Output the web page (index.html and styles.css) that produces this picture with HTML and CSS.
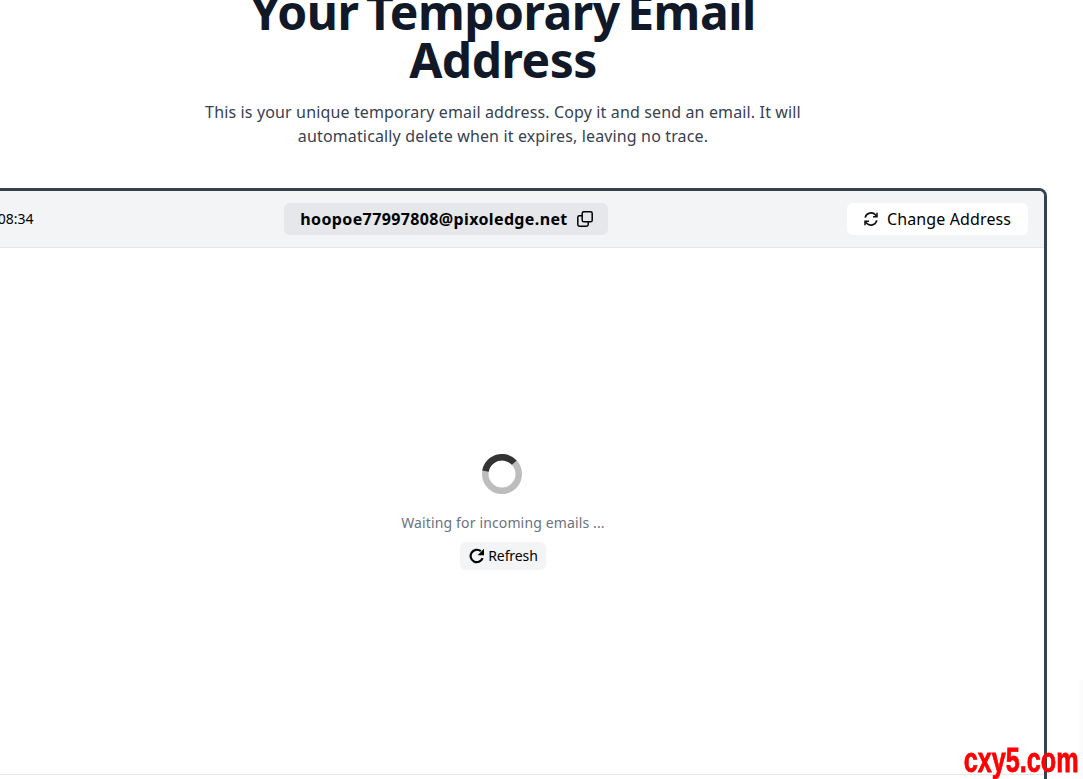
FILE: index.html
```html
<!DOCTYPE html>
<html lang="en">
<head>
    <meta charset="UTF-8">
    <meta name="viewport" content="width=device-width, initial-scale=1.0">
    <title>Your Temporary Email Address</title>
    <link rel="stylesheet" href="styles.css">
</head>
<body>
    <div class="main">
        <div class="hero">
            <h1>Your Temporary Email Address</h1>
            <p>This is your unique temporary email address. Copy it and send an email. It will automatically delete when it expires, leaving no trace.</p>
        </div>
        <div class="panel">
            <div class="panel-head">
                <div class="timer">00:08:34</div>
                <div class="address">
                    <span>hoopoe77997808@pixoledge.net</span>
                    <svg width="18" height="18" viewBox="0 0 18 18" fill="none" stroke="#000" stroke-width="1.5">
                        <rect x="6.2" y="1.8" width="10" height="10" rx="1.6"/>
                        <path d="M6.2 5.8H3.4a1.6 1.6 0 0 0-1.6 1.6v7.2a1.6 1.6 0 0 0 1.6 1.6h7.2a1.6 1.6 0 0 0 1.6-1.6v-2.8"/>
                    </svg>
                </div>
                <button class="change-btn">
                    <svg width="16" height="16" viewBox="0 0 16 16" fill="none" stroke="#111" stroke-width="1.7">
                        <path d="M2.2 6.6A6 6 0 0 1 12.6 4l1.2 1.4"/>
                        <path d="M13.8 9.4A6 6 0 0 1 3.4 12l-1.2-1.4"/>
                        <path d="M14 1.8v4h-4" stroke-width="1.5"/>
                        <path d="M2 14.2v-4h4" stroke-width="1.5"/>
                    </svg>
                    Change Address
                </button>
            </div>
            <div class="panel-body">
                <svg class="spinner" width="40" height="40" viewBox="0 0 40 40" fill="none" stroke-width="6.5">
                    <circle cx="20" cy="20" r="16.75" stroke="#bdbdbd"/>
                    <circle cx="20" cy="20" r="16.75" stroke="#333" stroke-dasharray="37 200" transform="rotate(-170 20 20)"/>
                </svg>
                <div class="waiting">Waiting for incoming emails ...</div>
                <button class="refresh-btn">
                    <svg width="16" height="16" viewBox="0 0 16 16" fill="none" stroke="#000" stroke-width="2.2">
                        <path d="M13.6 10.2A6.2 6.2 0 1 1 11.8 3.2"/>
                        <path d="M15 .8v6.4H8.6z" fill="#000" stroke="none"/>
                    </svg>
                    Refresh
                </button>
            </div>
            <div class="panel-foot"></div>
        </div>
    </div>
    <div class="edge-shade"></div>
    <div class="mark">cxy5.com</div>
</body>
</html>
```

FILE: styles.css
```css
* {
    margin: 0;
    padding: 0;
    box-sizing: border-box;
}
html, body {
    height: 100%;
    overflow: hidden;
    background-color: #fff;
}
body {
    font-family: "Noto Sans", "Open Sans", sans-serif;
    color: #000;
}
.main {
    width: 1088px;
    margin-left: -41px;
    margin-top: -12px;
}
.hero {
    display: flex;
    flex-direction: column;
    align-items: center;
    text-align: center;
}
.hero h1 {
    width: 600px;
    font-size: 48px;
    line-height: 48px;
    font-weight: 700;
    color: #111827;
    letter-spacing: -0.5px;
    word-spacing: -4.5px;
}
.hero p {
    width: 620px;
    margin-top: 16px;
    font-size: 16px;
    line-height: 24px;
    letter-spacing: 0.14px;
    color: #374151;
}
.panel {
    margin-top: 40px;
    height: 640px;
    border: 3px solid #374151;
    border-radius: 8px;
    display: flex;
    flex-direction: column;
}
.panel-head {
    height: 57px;
    flex: none;
    padding: 0 16px;
    display: flex;
    align-items: center;
    justify-content: space-between;
    background-color: #f3f4f6;
    border-bottom: 1px solid #e5e7eb;
    border-radius: 5px 5px 0 0;
}
.timer {
    font-size: 14px;
    width: 67px;
    padding-bottom: 1px;
}
.address {
    display: flex;
    align-items: center;
    gap: 8px;
    height: 32px;
    padding: 0 14px 0 16px;
    background-color: #e5e7eb;
    border-radius: 6px;
    font-size: 16px;
    font-weight: 700;
    letter-spacing: 0.37px;
}
.change-btn {
    display: flex;
    align-items: center;
    gap: 8px;
    height: 32px;
    width: 181px;
    padding: 0 16px;
    border: none;
    border-radius: 6px;
    background-color: #fff;
    font-family: inherit;
    font-size: 16px;
    letter-spacing: 0.12px;
    color: #000;
}
.panel-body {
    flex: 1;
    display: flex;
    flex-direction: column;
    align-items: center;
    padding-top: 206px;
}
.spinner {
    margin-right: 2px;
}
.waiting {
    margin-top: 19px;
    font-size: 14px;
    line-height: 20px;
    letter-spacing: 0.14px;
    color: #6b7280;
}
.refresh-btn {
    display: flex;
    align-items: center;
    gap: 3px;
    margin-top: 9px;
    height: 28px;
    padding: 0 8px 1px 9px;
    border: none;
    border-radius: 6px;
    background-color: #f3f4f6;
    font-family: inherit;
    font-size: 14px;
    letter-spacing: -0.1px;
    color: #000;
}
.panel-foot {
    height: 51px;
    flex: none;
    border-top: 1px solid #e5e7eb;
}
.edge-shade {
    position: fixed;
    right: 0;
    top: 680px;
    bottom: 0;
    width: 5px;
    background: linear-gradient(to right, rgba(0, 0, 0, 0), rgba(0, 0, 0, 0.025));
}
.mark {
    position: fixed;
    right: 4px;
    bottom: 1px;
    font-family: "Liberation Sans", sans-serif;
    font-size: 35px;
    line-height: 36px;
    font-weight: 700;
    color: #ff0000;
    -webkit-text-stroke: 0.8px #ff0000;
    transform: scaleX(0.72);
    transform-origin: right bottom;
}
```
